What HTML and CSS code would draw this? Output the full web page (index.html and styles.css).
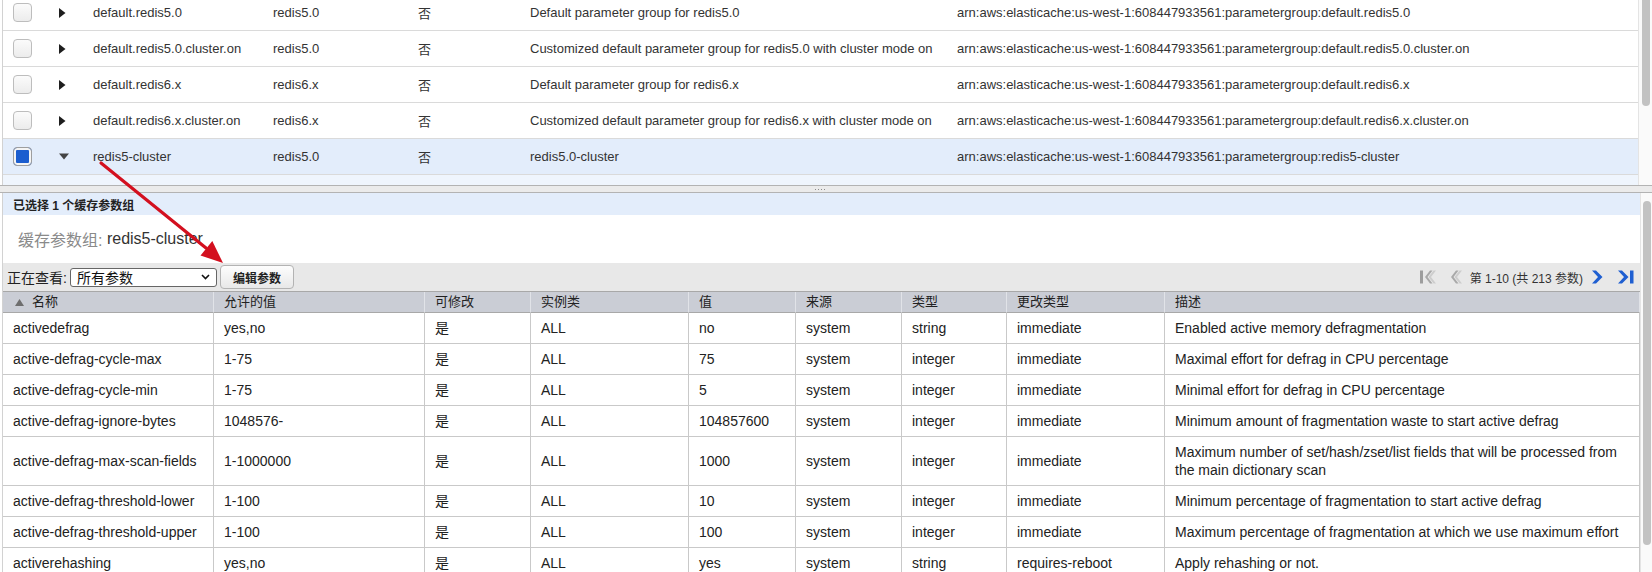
FILE: index.html
```html
<!DOCTYPE html>
<html lang="zh-CN">
<head>
<meta charset="utf-8">
<title>缓存参数组</title>
<link rel="stylesheet" href="styles.css">
</head>
<body>
<div class="page">
  <section class="pane top-pane">
    <div class="pane-body">
      <div class="grp-list">
        <div class="grp-row">
          <div class="c-check"><span class="cb"></span></div>
          <div class="c-tog"><svg class="tri-r" width="7" height="10" viewBox="0 0 7 10"><path d="M0 0 L6.5 5 L0 10 Z"/></svg></div>
          <div>default.redis5.0</div>
          <div>redis5.0</div>
          <div>否</div>
          <div>Default parameter group for redis5.0</div>
          <div>arn:aws:elasticache:us-west-1:608447933561:parametergroup:default.redis5.0</div>
        </div>
        <div class="grp-row">
          <div class="c-check"><span class="cb"></span></div>
          <div class="c-tog"><svg class="tri-r" width="7" height="10" viewBox="0 0 7 10"><path d="M0 0 L6.5 5 L0 10 Z"/></svg></div>
          <div>default.redis5.0.cluster.on</div>
          <div>redis5.0</div>
          <div>否</div>
          <div>Customized default parameter group for redis5.0 with cluster mode on</div>
          <div>arn:aws:elasticache:us-west-1:608447933561:parametergroup:default.redis5.0.cluster.on</div>
        </div>
        <div class="grp-row">
          <div class="c-check"><span class="cb"></span></div>
          <div class="c-tog"><svg class="tri-r" width="7" height="10" viewBox="0 0 7 10"><path d="M0 0 L6.5 5 L0 10 Z"/></svg></div>
          <div>default.redis6.x</div>
          <div>redis6.x</div>
          <div>否</div>
          <div>Default parameter group for redis6.x</div>
          <div>arn:aws:elasticache:us-west-1:608447933561:parametergroup:default.redis6.x</div>
        </div>
        <div class="grp-row">
          <div class="c-check"><span class="cb"></span></div>
          <div class="c-tog"><svg class="tri-r" width="7" height="10" viewBox="0 0 7 10"><path d="M0 0 L6.5 5 L0 10 Z"/></svg></div>
          <div>default.redis6.x.cluster.on</div>
          <div>redis6.x</div>
          <div>否</div>
          <div>Customized default parameter group for redis6.x with cluster mode on</div>
          <div>arn:aws:elasticache:us-west-1:608447933561:parametergroup:default.redis6.x.cluster.on</div>
        </div>
        <div class="grp-row sel">
          <div class="c-check"><span class="cb on"></span></div>
          <div class="c-tog"><svg class="tri-d" width="10" height="7" viewBox="0 0 10 7"><path d="M0 0.5 L10 0.5 L5 6.5 Z"/></svg></div>
          <div>redis5-cluster</div>
          <div>redis5.0</div>
          <div>否</div>
          <div>redis5.0-cluster</div>
          <div>arn:aws:elasticache:us-west-1:608447933561:parametergroup:redis5-cluster</div>
        </div>
        <div class="grp-detail"></div>
      </div>
    </div>
    <div class="vscroll"><div class="thumb"></div></div>
  </section>

  <div class="splitter"><span class="grip"></span></div>

  <section class="pane bottom-pane">
    <div class="pane-body">
      <div class="sel-bar">已选择 1 个缓存参数组</div>
      <div class="detail-title"><span class="lbl">缓存参数组:</span>&nbsp;redis5-cluster</div>
      <div class="toolbar">
        <div class="tb-left">
          <span class="view-lbl">正在查看:</span>
          <div class="select"><span>所有参数</span><svg width="9" height="6" viewBox="0 0 9 6"><path d="M1 1 L4.5 4.5 L8 1" fill="none" stroke="#111" stroke-width="1.6"/></svg></div>
          <button class="btn" type="button">编辑参数</button>
        </div>
        <div class="pager">
          <svg class="pg-first" width="16" height="14" viewBox="0 0 16 14"><rect x="0" y="0.5" width="3" height="13" fill="#9d9d9d"/><path d="M10 0.5 L5 7 L10 13.5 L12.5 13.5 L7.5 7 L12.5 0.5 Z" fill="#a9a9a9"/><path d="M13.5 0.5 L8.5 7 L13.5 13.5 L16 13.5 L11 7 L16 0.5 Z" fill="#cdcdcd"/></svg>
          <svg class="pg-prev" width="11" height="14" viewBox="0 0 11 14"><path d="M5 0.5 L0 7 L5 13.5 L7.5 13.5 L2.5 7 L7.5 0.5 Z" fill="#a9a9a9"/><path d="M8.5 0.5 L3.5 7 L8.5 13.5 L11 13.5 L6 7 L11 0.5 Z" fill="#cdcdcd"/></svg>
          <span class="pg-text">第 1-10 (共 213 参数)</span>
          <svg class="pg-next" width="11" height="14" viewBox="0 0 11 14"><path d="M0 0.5 L4 0.5 L10.5 7 L4 13.5 L0 13.5 L6 7 Z" fill="#1f5fd1"/></svg>
          <svg class="pg-last" width="16" height="14" viewBox="0 0 16 14"><path d="M0 0.5 L4 0.5 L10.5 7 L4 13.5 L0 13.5 L6 7 Z" fill="#1f5fd1"/><rect x="12" y="0.5" width="3.5" height="13" fill="#1f5fd1"/></svg>
        </div>
      </div>

      <div class="ptable">
        <div class="prow head">
          <div class="cell"><svg class="sort" width="9" height="7" viewBox="0 0 9 7"><path d="M0 7 L4.5 0 L9 7 Z"/></svg>名称</div>
          <div class="cell">允许的值</div>
          <div class="cell">可修改</div>
          <div class="cell">实例类</div>
          <div class="cell">值</div>
          <div class="cell">来源</div>
          <div class="cell">类型</div>
          <div class="cell">更改类型</div>
          <div class="cell">描述</div>
        </div>
        <div class="prow">
          <div class="cell">activedefrag</div><div class="cell">yes,no</div><div class="cell">是</div><div class="cell">ALL</div><div class="cell">no</div><div class="cell">system</div><div class="cell">string</div><div class="cell">immediate</div><div class="cell">Enabled active memory defragmentation</div>
        </div>
        <div class="prow">
          <div class="cell">active-defrag-cycle-max</div><div class="cell">1-75</div><div class="cell">是</div><div class="cell">ALL</div><div class="cell">75</div><div class="cell">system</div><div class="cell">integer</div><div class="cell">immediate</div><div class="cell">Maximal effort for defrag in CPU percentage</div>
        </div>
        <div class="prow">
          <div class="cell">active-defrag-cycle-min</div><div class="cell">1-75</div><div class="cell">是</div><div class="cell">ALL</div><div class="cell">5</div><div class="cell">system</div><div class="cell">integer</div><div class="cell">immediate</div><div class="cell">Minimal effort for defrag in CPU percentage</div>
        </div>
        <div class="prow">
          <div class="cell">active-defrag-ignore-bytes</div><div class="cell">1048576-</div><div class="cell">是</div><div class="cell">ALL</div><div class="cell">104857600</div><div class="cell">system</div><div class="cell">integer</div><div class="cell">immediate</div><div class="cell">Minimum amount of fragmentation waste to start active defrag</div>
        </div>
        <div class="prow">
          <div class="cell">active-defrag-max-scan-fields</div><div class="cell">1-1000000</div><div class="cell">是</div><div class="cell">ALL</div><div class="cell">1000</div><div class="cell">system</div><div class="cell">integer</div><div class="cell">immediate</div><div class="cell">Maximum number of set/hash/zset/list fields that will be processed from the main dictionary scan</div>
        </div>
        <div class="prow">
          <div class="cell">active-defrag-threshold-lower</div><div class="cell">1-100</div><div class="cell">是</div><div class="cell">ALL</div><div class="cell">10</div><div class="cell">system</div><div class="cell">integer</div><div class="cell">immediate</div><div class="cell">Minimum percentage of fragmentation to start active defrag</div>
        </div>
        <div class="prow">
          <div class="cell">active-defrag-threshold-upper</div><div class="cell">1-100</div><div class="cell">是</div><div class="cell">ALL</div><div class="cell">100</div><div class="cell">system</div><div class="cell">integer</div><div class="cell">immediate</div><div class="cell">Maximum percentage of fragmentation at which we use maximum effort</div>
        </div>
        <div class="prow">
          <div class="cell">activerehashing</div><div class="cell">yes,no</div><div class="cell">是</div><div class="cell">ALL</div><div class="cell">yes</div><div class="cell">system</div><div class="cell">string</div><div class="cell">requires-reboot</div><div class="cell">Apply rehashing or not.</div>
        </div>
      </div>
    </div>
    <div class="vscroll"><div class="thumb"></div></div>
  </section>

  <svg class="callout" width="1652" height="572" viewBox="0 0 1652 572">
    <line x1="101" y1="163" x2="206" y2="248" stroke="#d3101f" stroke-width="3.2" stroke-linecap="round"/>
    <polygon points="223,263 200.5,255.6 212.3,241" fill="#d3101f"/>
  </svg>
</div>
</body>
</html>
```

FILE: styles.css
```css
html, body {
  margin: 0;
  padding: 0;
}
body {
  font-family: "Liberation Sans", Arial, "Noto Sans CJK SC", sans-serif;
  font-size: 13px;
  color: #333;
  background: #fff;
}
.page {
  position: relative;
  width: 1652px;
  height: 572px;
  overflow: hidden;
  display: flex;
  flex-direction: column;
}

/* panes */
.pane {
  display: flex;
  overflow: hidden;
}
.top-pane {
  height: 185px;
  flex: none;
}
.bottom-pane {
  flex: 1;
  min-height: 0;
}
.pane-body {
  flex: 1;
  min-width: 0;
  margin-left: 2px;
  border-left: 1px solid #d2d2d2;
  overflow: hidden;
}
.vscroll {
  box-sizing: border-box;
  background: #fafafa;
  border-left: 1px solid #e4e4e4;
  display: flex;
  justify-content: center;
}
.top-pane .vscroll { width: 14px; }
.bottom-pane .vscroll { width: 12px; }
.thumb {
  width: 8px;
  background: #c2c2c2;
  border-radius: 4px;
}
.top-pane .thumb {
  height: 106px;
  border-radius: 0 0 4px 4px;
}
.bottom-pane .thumb {
  margin-top: 8px;
  height: 344px;
}

/* top list of parameter groups */
.grp-list {
  margin-top: -5px;
}
.grp-row {
  display: grid;
  grid-template-columns: 56px 34px 180px 145px 112px 427px 1fr;
  align-items: center;
  height: 36px;
  box-sizing: border-box;
  border-bottom: 1px solid #dadada;
  white-space: nowrap;
  color: #333;
}
.grp-row.sel {
  background: #e3edfb;
}
.grp-detail {
  height: 20px;
  background: #eff5fd;
}
.c-check {
  display: flex;
  align-items: center;
  padding-left: 10px;
}
.c-tog {
  display: flex;
  align-items: center;
}
.tri-r { fill: #1e1e1e; }
.tri-d { fill: #444; }
.cb {
  display: block;
  width: 19px;
  height: 19px;
  box-sizing: border-box;
  border: 1px solid #bdbdbd;
  border-radius: 4px;
  background: linear-gradient(#fbfbfb, #ececec);
}
.cb.on {
  border-color: #9e9e9e;
  background: #1b5dcf;
  box-shadow: inset 0 0 0 2px #f4f4f4;
}

/* splitter */
.splitter {
  flex: none;
  height: 8px;
  box-sizing: border-box;
  border-top: 1px solid #b3b3b3;
  border-bottom: 1px solid #b3b3b3;
  background: #ebebeb;
  display: flex;
  justify-content: center;
  align-items: center;
  padding-right: 12px;
}
.grip {
  width: 12px;
  height: 1px;
  background-image: radial-gradient(circle, #8c8c8c 0.7px, transparent 0.9px);
  background-size: 3px 1px;
  background-repeat: repeat-x;
}

/* bottom detail */
.sel-bar {
  height: 22px;
  box-sizing: border-box;
  padding: 4px 0 0 10px;
  line-height: 18px;
  background: #e3edfb;
  font-size: 12px;
  font-weight: bold;
  color: #222;
}
.detail-title {
  height: 48px;
  display: flex;
  align-items: center;
  padding-left: 15px;
  font-size: 16px;
  color: #333;
}
.lbl {
  color: #8a8a8a;
}
.toolbar {
  height: 28px;
  background: #e8e8e8;
  display: flex;
  align-items: center;
  justify-content: space-between;
}
.tb-left {
  display: flex;
  align-items: center;
  padding-left: 4px;
}
.view-lbl {
  font-size: 14px;
  color: #222;
  margin-right: 3px;
}
.select {
  width: 147px;
  height: 19px;
  box-sizing: border-box;
  border: 1px solid #666;
  border-radius: 3px;
  background: #fff;
  display: flex;
  align-items: center;
  justify-content: space-between;
  padding: 0 6px 0 6px;
  font-size: 14px;
  color: #111;
}
.btn {
  margin-left: 3px;
  width: 74px;
  height: 24px;
  box-sizing: border-box;
  border: 1px solid #b3b3b3;
  border-radius: 4px;
  background: linear-gradient(#fdfdfd, #e8e8e8);
  font-family: "Liberation Sans", Arial, "Noto Sans CJK SC", sans-serif;
  font-size: 12px;
  font-weight: bold;
  color: #222;
  padding: 0;
}
.pager {
  display: flex;
  align-items: center;
  padding-right: 6px;
  font-size: 12px;
  color: #333;
}
.pg-first { margin-right: 15px; }
.pg-prev { margin-right: 8px; }
.pg-text { margin-right: 9px; }
.pg-next { margin-right: 15px; }

/* parameter table */
.prow {
  display: grid;
  grid-template-columns: 211px 211px 106px 158px 107px 106px 105px 158px 1fr;
}
.cell {
  display: flex;
  align-items: center;
  padding: 6px 10px;
  line-height: 18px;
  font-size: 14px;
  border-right: 1px solid #c9c9c9;
  border-bottom: 1px solid #c9c9c9;
  color: #222;
  min-width: 0;
}
.prow.head {
  background: #cacdd5;
  border-top: 1px solid #a8a8a8;
}
.head .cell {
  padding: 1px 10px;
  font-size: 13px;
  border-right-color: #e1e3e8;
  border-bottom-color: #a8a8a8;
  color: #222;
}
.sort {
  fill: #6e6e6e;
  margin: 0 8px 0 2px;
}

/* overlay annotation */
.callout {
  position: absolute;
  left: 0;
  top: 0;
  pointer-events: none;
}
```
